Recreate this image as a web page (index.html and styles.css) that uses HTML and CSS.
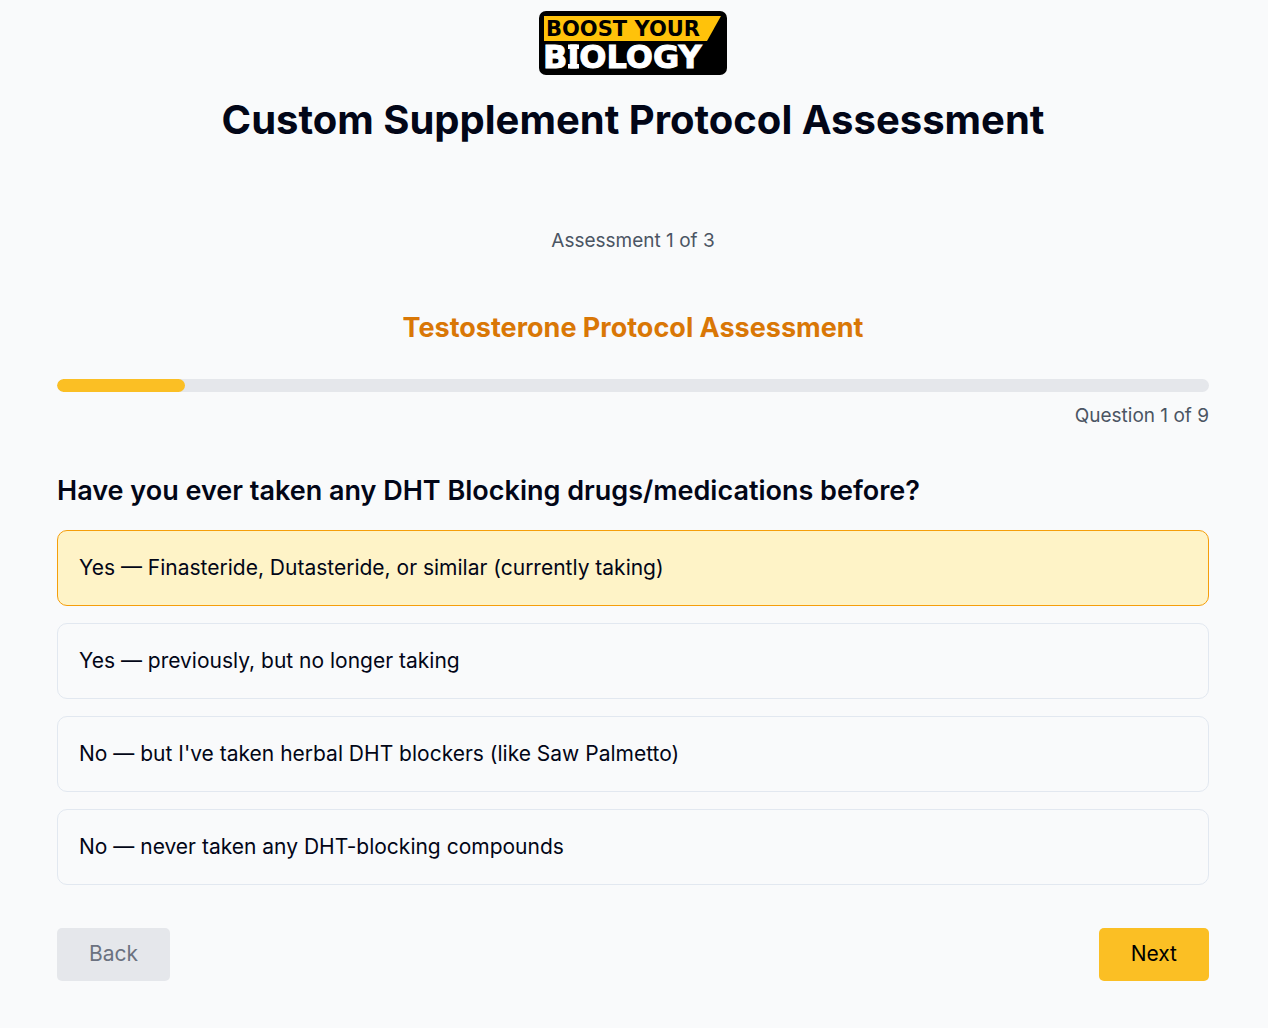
FILE: index.html
```html
<!DOCTYPE html>
<html lang="en">
<head>
    <meta charset="UTF-8">
    <meta name="viewport" content="width=device-width, initial-scale=1.0">
    <title>Custom Supplement Protocol Assessment</title>
    <link rel="stylesheet" href="styles.css">
</head>
<body>

    <header class="header">
        <svg class="logo" viewBox="0 0 188 64" role="img" aria-label="Boost Your Biology">
            <rect width="188" height="64" rx="7" fill="#000"/>
            <path d="M5 5H182L168 30H5Z" fill="#ffc20a"/>
            <text class="logo-top" x="7" y="25">BOOST YOUR</text>
            <text class="logo-bottom" x="4" y="57">BIOLOGY</text>
            <!-- slab ends of the I -->
            <path d="M29 33.500H40V38H29ZM29 53H40V57.500H29Z" fill="#fff"/>
        </svg>
        <h1 class="title">Custom Supplement Protocol Assessment</h1>
    </header>

    <main class="assessment">
        <p class="step">Assessment 1 of 3</p>
        <h2 class="subtitle">Testosterone Protocol Assessment</h2>

        <div class="progress">
            <div class="progress-bar" style="width: 11.11%"></div>
        </div>
        <p class="count">Question 1 of 9</p>

        <form>
            <fieldset class="question">
                <legend class="question-text">Have you ever taken any DHT Blocking drugs/medications before?</legend>
                <div class="options">
                    <label class="option">
                        <input type="radio" name="dht" value="current" checked>
                        Yes — Finasteride, Dutasteride, or similar (currently taking)
                    </label>
                    <label class="option">
                        <input type="radio" name="dht" value="previous">
                        Yes — previously, but no longer taking
                    </label>
                    <label class="option">
                        <input type="radio" name="dht" value="herbal">
                        No — but I've taken herbal DHT blockers (like Saw Palmetto)
                    </label>
                    <label class="option">
                        <input type="radio" name="dht" value="never">
                        No — never taken any DHT-blocking compounds
                    </label>
                </div>
            </fieldset>

            <div class="actions">
                <button class="button" type="button" disabled>Back</button>
                <button class="button next" type="button">Next</button>
            </div>
        </form>
    </main>

</body>
</html>
```
FILE: styles.css
```css
* {
    box-sizing: border-box;
}
body {
    font-family: Inter, sans-serif;
    font-size: 21px;
    line-height: 32px;
    color: #020617;
    background-color: #f9fafb;
    margin: 0;
    padding: 11px 59px 32px 57px;
}
h1, h2, p {
    margin: 0;
}
.header {
    display: flex;
    flex-direction: column;
    align-items: center;
    gap: 20px;
    text-align: center;
}
.logo {
    width: 188px;
    height: 64px;
}
.logo-top {
    font: bold 21px "DejaVu Sans", sans-serif;
}
.logo-bottom {
    font: bold 32px "DejaVu Sans", sans-serif;
    fill: #fff;
    stroke: #fff;
    stroke-width: 1px;
}
.title {
    font-size: 40px;
    line-height: 50px;
    font-weight: 700;
}
.assessment {
    padding-top: 82px;
}
.step, .count {
    font-size: 19px;
    line-height: 28px;
    color: #4b5563;
}
.step {
    text-align: center;
}
.subtitle {
    margin: 55px 0 33px;
    font-size: 27px;
    line-height: 36px;
    font-weight: 700;
    text-align: center;
    color: #d97706;
}
.progress {
    height: 13px;
    border-radius: 7px;
    background-color: #e5e7eb;
    overflow: hidden;
}
.progress-bar {
    height: 100%;
    border-radius: 7px;
    background-color: #fbbf24;
}
.count {
    margin-top: 10px;
    text-align: right;
}
.question {
    border: none;
    margin: 43px 0 0;
    padding: 0;
}
.question-text {
    padding: 0;
    margin-bottom: 21px;
    font-size: 27px;
    line-height: 36px;
    font-weight: 600;
}
.options {
    display: grid;
    gap: 17px;
}
.option {
    position: relative;
    padding: 21px;
    border: 1px solid #e2e8f0;
    border-radius: 10px;
    cursor: pointer;
}
/* the whole card is the radio */
.option input {
    position: absolute;
    opacity: 0;
}
.option:has(:checked) {
    background-color: #fef3c7;
    border-color: #f59e0b;
}
.option:focus-within {
    border-color: #f59e0b;
}
.actions {
    display: flex;
    justify-content: space-between;
    margin-top: 43px;
}
.button {
    padding: 10px 32px 11px;
    border: none;
    border-radius: 5px;
    font: inherit;
    font-size: 21px;
    color: #6b7280;
    background-color: #e5e7eb;
}
.button.next {
    color: #000;
    background-color: #fbbf24;
    cursor: pointer;
}
.button.next:hover {
    background-color: #f59e0b;
}
```
